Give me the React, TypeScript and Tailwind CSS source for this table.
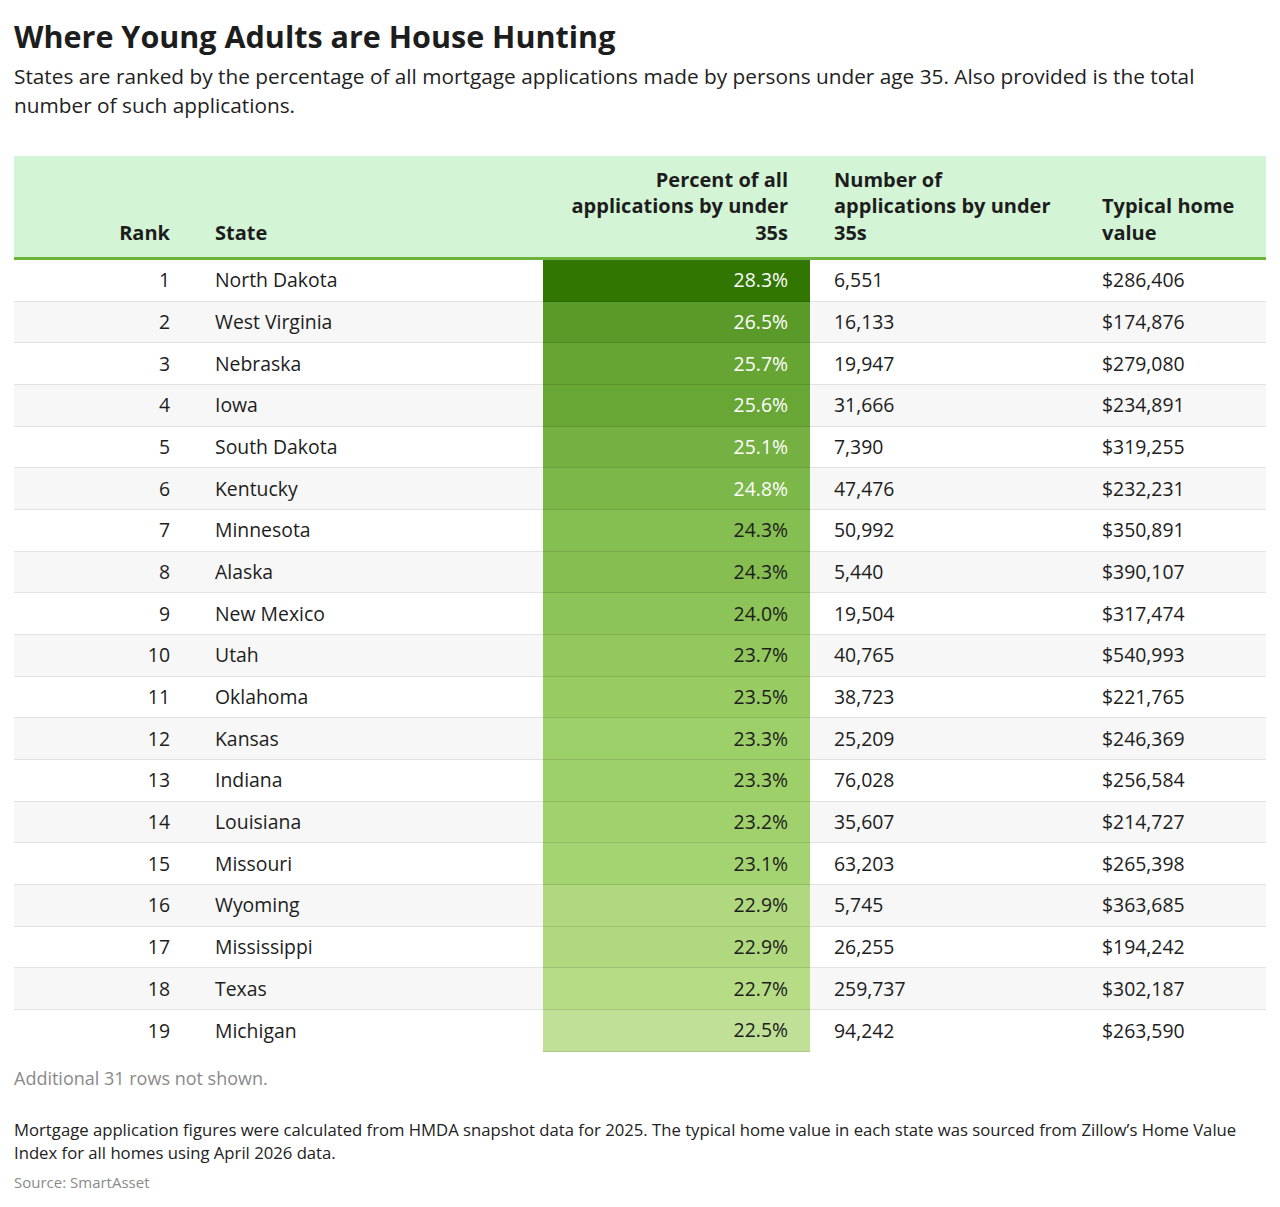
import React from "react";

type Row = {
  rank: number;
  state: string;
  pct: string;
  count: string;
  value: string;
  bg: string;
  light: boolean;
};

const rows: Row[] = [
  { rank: 1, state: "North Dakota", pct: "28.3%", count: "6,551", value: "$286,406", bg: "bg-[#307600]", light: true },
  { rank: 2, state: "West Virginia", pct: "26.5%", count: "16,133", value: "$174,876", bg: "bg-[#5a9a29]", light: true },
  { rank: 3, state: "Nebraska", pct: "25.7%", count: "19,947", value: "$279,080", bg: "bg-[#66a534]", light: true },
  { rank: 4, state: "Iowa", pct: "25.6%", count: "31,666", value: "$234,891", bg: "bg-[#68a636]", light: true },
  { rank: 5, state: "South Dakota", pct: "25.1%", count: "7,390", value: "$319,255", bg: "bg-[#74b142]", light: true },
  { rank: 6, state: "Kentucky", pct: "24.8%", count: "47,476", value: "$232,231", bg: "bg-[#7bb749]", light: true },
  { rank: 7, state: "Minnesota", pct: "24.3%", count: "50,992", value: "$350,891", bg: "bg-[#85be51]", light: false },
  { rank: 8, state: "Alaska", pct: "24.3%", count: "5,440", value: "$390,107", bg: "bg-[#86be52]", light: false },
  { rank: 9, state: "New Mexico", pct: "24.0%", count: "19,504", value: "$317,474", bg: "bg-[#8dc459]", light: false },
  { rank: 10, state: "Utah", pct: "23.7%", count: "40,765", value: "$540,993", bg: "bg-[#93c85e]", light: false },
  { rank: 11, state: "Oklahoma", pct: "23.5%", count: "38,723", value: "$221,765", bg: "bg-[#98cc63]", light: false },
  { rank: 12, state: "Kansas", pct: "23.3%", count: "25,209", value: "$246,369", bg: "bg-[#9dd068]", light: false },
  { rank: 13, state: "Indiana", pct: "23.3%", count: "76,028", value: "$256,584", bg: "bg-[#9dd068]", light: false },
  { rank: 14, state: "Louisiana", pct: "23.2%", count: "35,607", value: "$214,727", bg: "bg-[#a0d16c]", light: false },
  { rank: 15, state: "Missouri", pct: "23.1%", count: "63,203", value: "$265,398", bg: "bg-[#a4d371]", light: false },
  { rank: 16, state: "Wyoming", pct: "22.9%", count: "5,745", value: "$363,685", bg: "bg-[#b0d97f]", light: false },
  { rank: 17, state: "Mississippi", pct: "22.9%", count: "26,255", value: "$194,242", bg: "bg-[#b0d97f]", light: false },
  { rank: 18, state: "Texas", pct: "22.7%", count: "259,737", value: "$302,187", bg: "bg-[#b6dc86]", light: false },
  { rank: 19, state: "Michigan", pct: "22.5%", count: "94,242", value: "$263,590", bg: "bg-[#bfe096]", light: false },
];

const cols = "grid grid-cols-[176px_353px_267px_268px_188px]";

export default function App(): JSX.Element {
  return (
    <div className="min-h-[1207px] bg-white px-[14px] pt-[16px] text-[#1d1d1d] font-['Open_Sans',sans-serif]">
      <h1 className="text-[30.5px] font-bold leading-[40px] text-[#1d1d1d]">
        Where Young Adults are House Hunting
      </h1>
      <p className="mt-[6px] text-[20.8px] leading-[29px] text-[#222]">
        States are ranked by the percentage of all mortgage applications made by persons under age 35. Also provided is the total
        <br />
        number of such applications.
      </p>

      <div className="mt-[36px] w-[1252px]">
        {/* header */}
        <div className={`${cols} h-[104px] bg-[#d4f4d6] border-b-[3px] border-[#6bb33a] text-[20px] font-bold leading-[26.5px] text-[#1d1d1d]`}>
          <div className="flex items-end justify-end pr-[20px] pb-[11px]">Rank</div>
          <div className="flex items-end pl-[25px] pb-[11px]">State</div>
          <div className="flex items-end justify-end pr-[22px] pb-[11px] text-right">
            <span>
              Percent of all
              <br />
              applications by under
              <br />
              35s
            </span>
          </div>
          <div className="flex items-end pl-[24px] pb-[11px]">
            <span>
              Number of
              <br />
              applications by under
              <br />
              35s
            </span>
          </div>
          <div className="flex items-end pl-[24px] pb-[11px]">
            <span>
              Typical home
              <br />
              value
            </span>
          </div>
        </div>

        {/* body */}
        {rows.map((r, i) => {
          const line = i < rows.length - 1 ? "border-b border-[#e2e2e2]" : "";
          return (
            <div
              key={r.rank}
              className={`${cols} h-[41.68px] text-[19.4px] leading-[26px] ${i % 2 === 1 ? "bg-[#f7f7f7]" : "bg-white"}`}
            >
              <div className={`flex items-center justify-end pr-[20px] ${line}`}>{r.rank}</div>
              <div className={`flex items-center pl-[25px] ${line}`}>{r.state}</div>
              <div
                className={`flex items-center justify-end pr-[22px] border-b border-black/10 ${r.bg} ${r.light ? "text-white" : "text-[#1d1d1d]"}`}
              >
                {r.pct}
              </div>
              <div className={`flex items-center pl-[24px] ${line}`}>{r.count}</div>
              <div className={`flex items-center pl-[24px] ${line}`}>{r.value}</div>
            </div>
          );
        })}
      </div>

      <p className="mt-[14px] text-[18px] leading-[24px] text-[#8a8a8a]">Additional 31 rows not shown.</p>
      <p className="mt-[28px] text-[16.7px] leading-[23px] text-[#222]">
        Mortgage application figures were calculated from HMDA snapshot data for 2025. The typical home value in each state was sourced from Zillow’s Home Value
        <br />
        Index for all homes using April 2026 data.
      </p>
      <p className="mt-[8px] text-[15px] leading-[20px] text-[#8a8a8a]">Source: SmartAsset</p>
    </div>
  );
}
